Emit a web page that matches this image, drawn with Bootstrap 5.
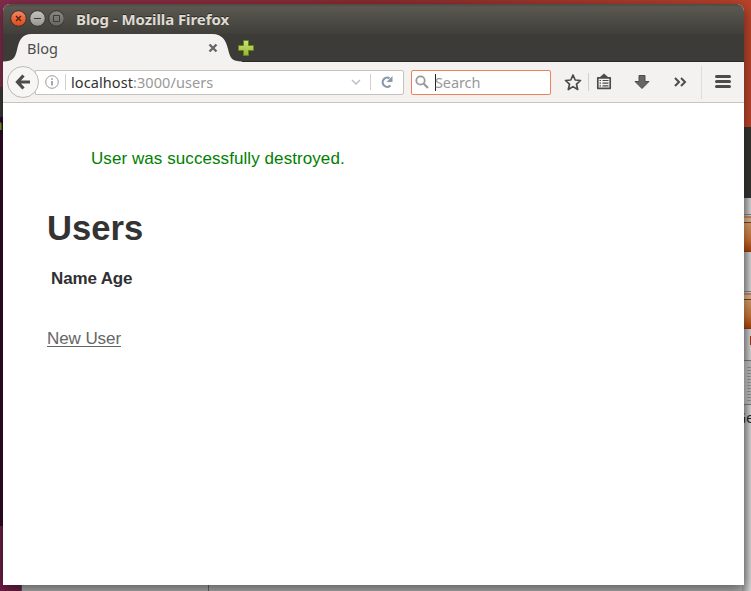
<!DOCTYPE html>
<html lang="en">
<head>
<meta charset="utf-8">
<meta name="viewport" content="width=device-width, initial-scale=1">
<title>Blog</title>
<link href="https://cdn.jsdelivr.net/npm/bootstrap@5.3.0/dist/css/bootstrap.min.css" rel="stylesheet">
<style>
body{width:751px;height:591px;background:#6b2239;font-family:"Noto Sans","Open Sans",sans-serif;font-size:14.5px;line-height:20px}
svg{display:block;flex:none}
.desktop{left:0;top:0}
.win{width:741px;height:581px;margin:4px 0 0 3px;border-radius:7px 7px 0 0;box-shadow:0 4px 14px rgba(0,0,0,.5)}
.titlebar{height:30px;padding-left:7px;background:linear-gradient(#4b4a43 0,#5a5850 3px,#504f48 12px,#403f3a 30px)}
.wintitle{color:#dfdbd2;font-weight:700;font-size:15px;letter-spacing:-.07px;margin-left:12px;text-shadow:0 -1px #2c2b28}
.tabstrip{height:28px;background:#3c3b37;box-shadow:inset 0 -1px #2b2929}
.tab-shape{left:0;top:0}
.tab-content-row{width:227px;padding:0 11px 0 24px}
.tab-label{color:#4c4c4c}
.toolbar{height:41px;background:#f3f2f1;border-bottom:1px solid #c7c3be;padding-left:4px}
.back{width:32px;height:32px;border:1px solid #bdb9b5;background:#f7f6f5;z-index:2}
.urlbar{width:369px;height:25px;margin-left:-4px;background:#fff;border:1px solid #c7c2bc;border-radius:0 2px 2px 0;padding-left:9px}
.url-text{color:#999;margin-left:5px;letter-spacing:.08px}
.url-text span{color:#333}
.vsep{width:1px;height:16px;background:#d0d0d0}
.info-sep{margin-left:6px}
.searchbox{width:140px;height:25px;margin-left:7px;background:#fff;border:1px solid #ee8159;border-radius:2px;padding-left:3px}
.caret{width:1px;height:17px;background:#222;margin-left:6px}
.hint{color:#999;margin-left:-1px;letter-spacing:-.1px}
.page{font-family:"Liberation Sans",Arial,sans-serif;font-size:17px;line-height:24px;color:#333;padding:44px 44px 0}
.notice{color:green;padding-left:44px;letter-spacing:.075px}
.page h1{font-size:34.6px;font-weight:700;line-height:42px;margin:36px 0 0}
.people{margin:17px 0 0;border-collapse:separate;border-spacing:2px;line-height:20px;letter-spacing:-.15px}
.people th{padding:1px 0 1px 2px;color:#2f3033}
.new-link{margin-top:35px;letter-spacing:-.08px}
.new-link a{color:#666;text-decoration-thickness:1px;text-underline-offset:2px}
</style>
<script src="https://cdn.jsdelivr.net/npm/bootstrap@5.3.0/dist/js/bootstrap.bundle.min.js"></script>
</head>
<body class="overflow-hidden position-relative">
<svg class="desktop position-absolute" width="751" height="591" aria-hidden="true">
  <defs>
    <linearGradient id="wall"><stop stop-color="#822c4c"/><stop offset=".5" stop-color="#8b2b30"/><stop offset="1" stop-color="#b9432a"/></linearGradient>
    <linearGradient id="folder" x2="0" y2="1"><stop stop-color="#d3a16d"/><stop offset=".6" stop-color="#c87335"/><stop offset="1" stop-color="#a6430b"/></linearGradient>
    <linearGradient id="pane"><stop stop-color="#999"/><stop offset="1" stop-color="#d9d9d9"/></linearGradient>
  </defs>
  <rect width="751" height="127" fill="url(#wall)"/>
  <rect y="87" width="12" height="30" fill="#3b3a38"/>
  <rect y="117" width="12" height="409" fill="#32082c"/>
  <text x="-6" y="130" font-family="Liberation Mono" font-size="14" font-weight="700" fill="#65a51c">n</text>
  <rect y="526" width="22" height="65" fill="#701f49"/>
  <rect x="21" y="580" width="730" height="11" fill="#b0b0b0"/>
  <rect x="21" y="580" width="1" height="11" fill="#555"/><rect x="208" y="580" width="1" height="11" fill="#68665f"/>
  <rect x="742" y="127" width="9" height="71" fill="#343331"/>
  <rect x="742" y="198" width="9" height="393" fill="url(#pane)"/>
  <g id="fold"><path d="M742 214.500h9" stroke="#7d8490"/><path d="M742 217h9" stroke="#cc8159" stroke-width="2"/><path fill="#d3b293" d="M742 218h9v4h-9z"/><path fill="url(#folder)" d="M742 222h9v29h-9z"/><path d="M742 222.500h9M742 251.500h9" stroke="#8e3a10"/></g>
  <use href="#fold" y="77"/>
  <path fill="#a33816" d="M750 336h1v9h-1z"/>
  <path fill="#bcbcbc" stroke="#777" d="M740 360.500h12v44h-12z"/>
  <path d="M749 367v36" stroke="#888" stroke-width="3" stroke-dasharray="1 2"/>
  <text x="735.500" y="423" font-family="Noto Sans" font-size="14.500" fill="#222">Ge</text>
</svg>

<main class="win d-flex flex-column bg-white overflow-hidden position-relative">
  <header class="titlebar d-flex align-items-center flex-shrink-0">
    <svg width="54" height="18" viewBox="0 0 54 18">
      <defs><linearGradient id="red" x2="0" y2="1"><stop stop-color="#f58762"/><stop offset="1" stop-color="#dc4918"/></linearGradient><linearGradient id="grey" x2="0" y2="1"><stop stop-color="#c6c4be"/><stop offset="1" stop-color="#969590"/></linearGradient><linearGradient id="dark" x2="0" y2="1"><stop stop-color="#898881"/><stop offset="1" stop-color="#66655f"/></linearGradient></defs>
      <circle cx="8.500" cy="8.500" r="7.800" fill="url(#red)" stroke="#33322e"/><path d="M6 6l5 5m0-5l-5 5" stroke="#51200f" stroke-width="1.300"/>
      <circle cx="27.500" cy="8.500" r="7.800" fill="url(#grey)" stroke="#33322e"/><path d="M24 8.500h7" stroke="#3c3b37"/>
      <circle cx="46.500" cy="8.500" r="7.800" fill="url(#dark)" stroke="#33322e"/><path d="M43.500 5.500h6v6h-6z" fill="none" stroke="#3c3b37"/>
    </svg>
    <div class="wintitle text-nowrap">Blog - Mozilla Firefox</div>
  </header>
  <nav class="tabstrip d-flex align-items-center position-relative flex-shrink-0">
    <svg class="tab-shape position-absolute" width="244" height="28"><path d="M0 27.500C10 27.500 12 24 14 16C16 7 18 0 29 0H209C220 0 223 7 225 15C227 24 229 27.500 239 27.500V28H0z" fill="#f3f2f1"/></svg>
    <div class="tab-content-row d-flex align-items-center justify-content-between position-relative">
      <span class="tab-label">Blog</span>
      <svg width="12" height="12" viewBox="0 0 12 12"><path d="M2.500 2.500l7 7m0-7l-7 7" stroke="#666" stroke-width="2.400"/></svg>
    </div>
    <svg class="ms-2 position-relative" width="16" height="16" viewBox="0 0 16 16"><defs><linearGradient id="plus" x2="0" y2="1"><stop stop-color="#cfe57a"/><stop offset="1" stop-color="#98b72d"/></linearGradient></defs><path d="M5.500.5h5v5h5v5h-5v5h-5v-5h-5v-5h5z" fill="url(#plus)" stroke="#5d8716"/></svg>
  </nav>
  <div class="toolbar d-flex align-items-center flex-shrink-0">
    <div class="back rounded-circle d-flex align-items-center justify-content-center flex-shrink-0 position-relative">
      <svg width="16" height="16" viewBox="0 0 16 16"><path d="M8.500 1.500L2.500 8l6 6.500M3.500 8H15" fill="none" stroke="#4c4c4c" stroke-width="3.200"/></svg>
    </div>
    <div class="urlbar d-flex align-items-center flex-shrink-0">
      <svg width="14" height="14" viewBox="0 0 14 14" fill="none"><circle cx="7" cy="7" r="6.300" stroke="#999"/><path d="M7 6v4.500M7 3.300v1.500" stroke="#888" stroke-width="1.500"/></svg>
      <i class="vsep info-sep"></i>
      <div class="url-text flex-grow-1"><span>localhost</span>:3000/users</div>
      <svg width="12" height="12" viewBox="0 0 12 12"><path d="M2 4l4 4 4-4" fill="none" stroke="#bbb" stroke-width="1.300"/></svg>
      <i class="vsep ms-2"></i>
      <svg class="ms-2 me-2" width="16" height="16" viewBox="0 0 16 16"><path d="M10.500 4.200A4.600 4.600 0 1 0 11.500 11.500" fill="none" stroke="#8a98a8" stroke-width="2.200"/><path d="M13.500 2v6H7.500z" fill="#8a98a8"/></svg>
    </div>
    <div class="searchbox d-flex align-items-center flex-shrink-0">
      <svg width="14" height="14" viewBox="0 0 14 14" fill="none" stroke="#999"><circle cx="5.500" cy="5.500" r="4.200" stroke-width="1.800"/><path d="M8.800 8.800l4.200 4.200" stroke-width="2.300"/></svg>
      <i class="caret"></i><span class="hint">Search</span>
    </div>
    <svg width="193" height="40" viewBox="0 0 193 40" fill="none" stroke="#4c4c4c">
      <path d="M22 13l2.200 5 5.300.5-4 3.700 1.200 5.300-4.700-2.900-4.700 2.900 1.200-5.300-4-3.700 5.300-.5z" stroke-width="1.700" stroke-linejoin="round"/>
      <path d="M37.500 11v18" stroke="#d0cece"/>
      <path d="M46.800 15.800h12.400v10.500H46.800z" stroke-width="1.700" stroke-linejoin="round"/><path d="M49 15l4-3.500 4 3.500z" fill="#4c4c4c" stroke="none"/><path d="M48.500 18.500h1.500m1.500 0h6m-9 2.700h1.500m1.500 0h6m-9 2.700h1.500m1.500 0h6" stroke-width="1.200"/>
      <path d="M88 13.500h6v6h4l-7 7-7-7h4z" fill="#666" stroke="#4c4c4c"/>
      <path d="M124 16l4 4-4 4m6-8l4 4-4 4" stroke-width="2"/>
      <path d="M150.500 4v33" stroke="#dfddda"/>
      <path d="M165.500 14.500h13m-13 5h13m-13 5h13" stroke-width="3" stroke-linecap="round"/>
    </svg>
  </div>
  <section class="page flex-grow-1">
    <p class="notice mb-0">User was successfully destroyed.</p>
    <h1>Users</h1>
    <table class="people"><thead><tr><th>Name</th><th>Age</th></tr></thead></table>
    <div class="new-link"><a href="#">New User</a></div>
  </section>
</main>
</body>
</html>
